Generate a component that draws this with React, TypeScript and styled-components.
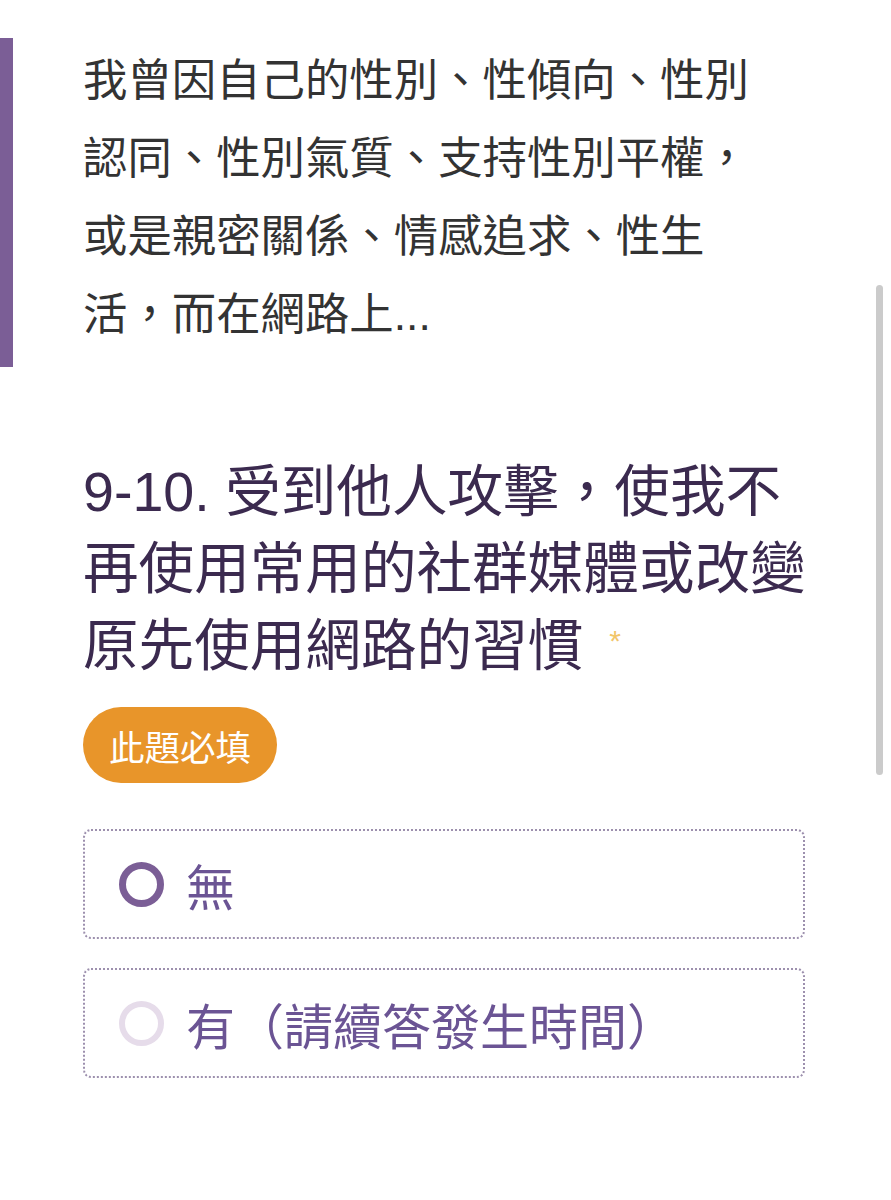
import React from "react";
import styled, { createGlobalStyle } from "styled-components";

const GlobalStyle = createGlobalStyle`
  html, body {
    margin: 0;
    padding: 0;
    background: #ffffff;
  }
  body {
    font-family: "Liberation Sans", "Noto Sans CJK TC", sans-serif;
    -webkit-font-smoothing: antialiased;
  }
`;

const Page = styled.div`
  position: relative;
  width: 891px;
  height: 1200px;
  overflow: hidden;
  padding-top: 38px;
  box-sizing: border-box;
`;

const Intro = styled.div`
  border-left: 13px solid #7b5e96;
  padding: 4px 0 13px 70px;
`;

const IntroText = styled.p`
  margin: 0;
  width: 685px;
  font-size: 44.4px;
  line-height: 78px;
  color: #333333;
`;

const Question = styled.section`
  padding: 87px 0 0 83px;
  width: 740px;
`;

const Title = styled.h2`
  margin: 0;
  font-size: 55.6px;
  line-height: 77px;
  font-weight: 400;
  color: #3b2a4f;
`;

const Star = styled.span`
  display: inline-block;
  margin-left: 26px;
  font-size: 30px;
  line-height: 20px;
  vertical-align: 14px;
  color: #f2c66a;
`;

const Badge = styled.span`
  display: inline-flex;
  align-items: center;
  height: 76px;
  margin-top: 22px;
  padding: 0 26px;
  border-radius: 38px;
  background: #e8952a;
  color: #ffffff;
  font-size: 35.5px;
`;

const Options = styled.div`
  display: flex;
  flex-direction: column;
  gap: 29px;
  width: 722px;
  margin-top: 46px;
`;

const Option = styled.label`
  display: flex;
  align-items: center;
  gap: 22px;
  height: 110px;
  padding-left: 34px;
  box-sizing: border-box;
  border: 2px dotted #9d90ae;
  border-radius: 8px;
  font-size: 49px;
  color: #6b5494;
`;

const Radio = styled.span<{ $active?: boolean }>`
  width: 45px;
  height: 45px;
  box-sizing: border-box;
  border-radius: 50%;
  border: ${(p) => (p.$active ? "7px solid #7b5e96" : "6px solid #e6dcea")};
  flex-shrink: 0;
`;

const ScrollThumb = styled.div`
  position: absolute;
  top: 285px;
  right: 8px;
  width: 7px;
  height: 490px;
  border-radius: 4px;
  background: #cbcbcb;
`;

export default function App() {
  return (
    <>
      <GlobalStyle />
      <Page>
        <Intro>
          <IntroText>
            我曾因自己的性別、性傾向、性別認同、性別氣質、支持性別平權，或是親密關係、情感追求、性生活，而在網路上...
          </IntroText>
        </Intro>
        <Question>
          <Title>
            9-10. 受到他人攻擊，使我不再使用常用的社群媒體或改變原先使用網路的習慣
            <Star>*</Star>
          </Title>
          <Badge>此題必填</Badge>
          <Options>
            <Option>
              <Radio $active />
              無
            </Option>
            <Option>
              <Radio />
              有（請續答發生時間）
            </Option>
          </Options>
        </Question>
        <ScrollThumb />
      </Page>
    </>
  );
}
